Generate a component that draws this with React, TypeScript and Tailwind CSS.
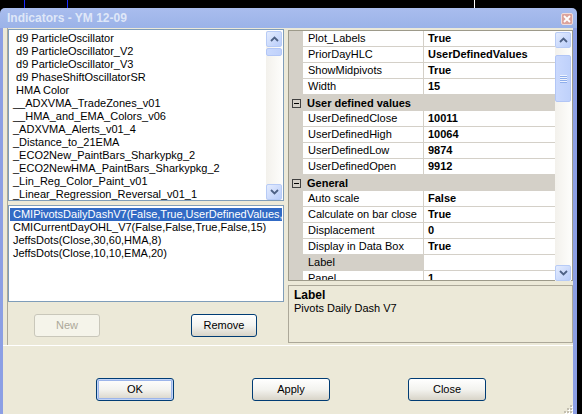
import React from "react";

const available = [
  " d9 ParticleOscillator",
  " d9 ParticleOscillator_V2",
  " d9 ParticleOscillator_V3",
  " d9 PhaseShiftOscillatorSR",
  " HMA Color",
  "__ADXVMA_TradeZones_v01",
  "__HMA_and_EMA_Colors_v06",
  "_ADXVMA_Alerts_v01_4",
  "_Distance_to_21EMA",
  "_ECO2New_PaintBars_Sharkypkg_2",
  "_ECO2NewHMA_PaintBars_Sharkypkg_2",
  "_Lin_Reg_Color_Paint_v01",
  "_Linear_Regression_Reversal_v01_1",
];

const applied = [
  "CMIPivotsDailyDashV7(False,True,UserDefinedValues,True,15)",
  "CMICurrentDayOHL_V7(False,False,True,False,15)",
  "JeffsDots(Close,30,60,HMA,8)",
  "JeffsDots(Close,10,10,EMA,20)",
];

type Prop = { name: string; value?: string; category?: boolean; selected?: boolean };

const props: Prop[] = [
  { name: "Plot_Labels", value: "True" },
  { name: "PriorDayHLC", value: "UserDefinedValues" },
  { name: "ShowMidpivots", value: "True" },
  { name: "Width", value: "15" },
  { name: "User defined values", category: true },
  { name: "UserDefinedClose", value: "10011" },
  { name: "UserDefinedHigh", value: "10064" },
  { name: "UserDefinedLow", value: "9874" },
  { name: "UserDefinedOpen", value: "9912" },
  { name: "General", category: true },
  { name: "Auto scale", value: "False" },
  { name: "Calculate on bar close", value: "True" },
  { name: "Displacement", value: "0" },
  { name: "Display in Data Box", value: "True" },
  { name: "Label", value: "", selected: true },
  { name: "Panel", value: "1" },
];

function Arrow({ up }: { up?: boolean }) {
  return (
    <div className="h-[16px] w-[16px] shrink-0 rounded-[2px] border border-[#b7cbf6] bg-linear-to-br from-[#e4ecfe] to-[#b9cdfa] flex items-center justify-center">
      <svg width="9" height="6" viewBox="0 0 9 6">
        <path
          d={up ? "M1 5 L4.5 1.5 L8 5" : "M1 1 L4.5 4.5 L8 1"}
          stroke="#4d6185"
          strokeWidth="1.8"
          fill="none"
        />
      </svg>
    </div>
  );
}

function Thumb({ h, top }: { h: number; top: number }) {
  return (
    <div
      className="w-[16px] rounded-[2px] border border-[#b2c6f6] bg-linear-to-r from-[#cad9fd] to-[#bfd1fb] flex flex-col items-center justify-center gap-[1px]"
      style={{ height: h, marginTop: top }}
    >
      {h > 20 &&
        [0, 1, 2, 3].map((i) => (
          <div key={i} className="w-[7px] h-[1px] bg-[#eef3fe] shadow-[0_1px_0_#8faeeb]" />
        ))}
    </div>
  );
}

function Scrollbar({ thumbTop, thumbH }: { thumbTop: number; thumbH: number }) {
  return (
    <div className="w-[16px] h-full flex flex-col bg-linear-to-r from-[#f3f1ec] to-[#fdfdfb]">
      <Arrow up />
      <Thumb h={thumbH} top={thumbTop} />
      <div className="flex-1" />
      <Arrow />
    </div>
  );
}

function Button({
  label,
  w,
  disabled,
  def,
}: {
  label: string;
  w: string;
  disabled?: boolean;
  def?: boolean;
}) {
  if (disabled)
    return (
      <div
        className={`${w} h-[23px] rounded-[3px] border border-[#c9c7ba] bg-[#f5f4ea] text-[#aca899] text-[11px] flex items-center justify-center`}
      >
        {label}
      </div>
    );
  return (
    <div
      className={`${w} h-[23px] rounded-[3px] border border-[#003c74] bg-linear-to-b from-[#ffffff] via-[#f3f3ef] to-[#d8d4c8] text-black text-[11px] flex items-center justify-center ${
        def ? "shadow-[inset_0_0_0_1px_#c2d4f7,inset_0_0_0_2px_#9cb5ea]" : ""
      }`}
    >
      {label}
    </div>
  );
}

export default function App() {
  return (
    <div className="w-[582px] h-[414px] bg-black overflow-hidden font-['Liberation_Sans',Arial,sans-serif]">
      {/* chart behind */}
      <div className="h-[8px] flex">
        <div className="w-[24px]" />
        <div className="w-px bg-[#1a2cff]" />
        <div className="w-[42px]" />
        <div className="w-px bg-[#1a2cff]" />
        <div className="w-[406px]" />
        <div className="w-px bg-white" />
      </div>

      <div className="w-[577px] h-[406px] flex flex-col">
        {/* title bar */}
        <div className="h-[20px] shrink-0 rounded-t-[5px] bg-linear-to-b from-[#a9bdee] to-[#9bb3e8] flex items-center justify-between pl-[7px] pr-[4px]">
          <span className="text-[12px] font-bold text-[#dfe7f8] leading-none">Indicators - YM 12-09</span>
          <div className="mt-[2px] w-[12px] h-[12px] rounded-[2px] border border-[#f1dcda] bg-[#dca39c] flex items-center justify-center">
            <svg width="8" height="8" viewBox="0 0 8 8">
              <path d="M1 1 L7 7 M7 1 L1 7" stroke="white" strokeWidth="1.8" />
            </svg>
          </div>
        </div>

        {/* body */}
        <div className="flex-1 flex flex-col bg-[#ece9d8] border-l-[3px] border-r-[4px] border-[#8c9fe4]">
          <div className="h-[317px] flex pl-[4px]">
            {/* left column */}
            <div className="w-[277px] border-l border-[#aca899] pt-[1px] flex flex-col">
              <div className="w-[276px] h-[172px] border border-[#7f9db9] bg-white flex pl-[1px] pt-[1px] pr-[1px]">
                <div className="flex-1 pt-[1px] text-[11px] leading-[13px] text-black overflow-hidden">
                  {available.map((t) => (
                    <div key={t} className="h-[13px] pl-[3px] whitespace-pre">
                      {t}
                    </div>
                  ))}
                </div>
                <div className="h-[169px]">
                  <Scrollbar thumbTop={1} thumbH={8} />
                </div>
              </div>

              <div className="mt-[4px] w-[276px] h-[97px] border border-[#7f9db9] bg-white px-[1px] pt-[2px] text-[11px] leading-[13px]">
                {applied.map((t, i) => (
                  <div
                    key={t}
                    className={`h-[13px] pl-[3px] whitespace-nowrap overflow-hidden ${
                      i === 0 ? "bg-[#316ac5] text-white" : "text-black"
                    }`}
                  >
                    {t}
                  </div>
                ))}
              </div>

              <div className="mt-[12px] flex pl-[26px] gap-[91px]">
                <Button label="New" w="w-[66px]" disabled />
                <Button label="Remove" w="w-[66px]" />
              </div>
            </div>

            {/* right column */}
            <div className="ml-[4px] w-[285px] flex flex-col pt-[2px]">
              <div className="h-[251px] border border-[#9d9a8a] bg-white flex">
                <div className="w-[266px] overflow-hidden text-[11px] leading-[15px]">
                  {props.map((p) =>
                    p.category ? (
                      <div key={p.name} className="h-[16px] bg-[#d4d0c8] flex items-center">
                        <div className="w-[14px] flex justify-center">
                          <div className="w-[9px] h-[9px] border border-[#404040] flex items-center justify-center">
                            <div className="w-[5px] h-px bg-black" />
                          </div>
                        </div>
                        <span className="pl-[4px] font-bold text-black">{p.name}</span>
                      </div>
                    ) : (
                      <div key={p.name} className="h-[16px] flex">
                        <div className="w-[14px] bg-[#d4d0c8]" />
                        <div
                          className={`w-[120px] pl-[5px] border-b border-[#d4d0c8] text-black whitespace-nowrap ${
                            p.selected ? "bg-[#d4d0c8]" : ""
                          }`}
                        >
                          {p.name}
                        </div>
                        <div className="w-px bg-[#d4d0c8]" />
                        <div className="flex-1 pl-[4px] border-b border-[#d4d0c8] font-bold text-black">
                          {p.value}
                        </div>
                      </div>
                    )
                  )}
                </div>
                <div className="pt-[1px]">
                  <div className="h-[249px]">
                    <Scrollbar thumbTop={7} thumbH={47} />
                  </div>
                </div>
              </div>

              <div className="mt-[4px] h-[58px] border border-[#aca899] px-[5px] pt-[3px] text-[11px] leading-[13px] text-black">
                <div className="font-bold text-[12px]">Label</div>
                <div>Pivots Daily Dash V7</div>
              </div>
            </div>
          </div>

          {/* bottom buttons */}
          <div className="relative flex-1 border-t border-white pt-[32px] pl-[93px] flex gap-[78px]">
            <Button label="OK" w="w-[78px]" def />
            <Button label="Apply" w="w-[78px]" />
            <Button label="Close" w="w-[78px]" />
            <svg className="absolute right-0 bottom-0" width="11" height="11" viewBox="0 0 11 11">
              {[
                [8, 2],
                [5, 5],
                [8, 5],
                [2, 8],
                [5, 8],
                [8, 8],
              ].map(([x, y]) => (
                <g key={`${x}-${y}`}>
                  <rect x={x + 1} y={y + 1} width="2" height="2" fill="white" />
                  <rect x={x} y={y} width="2" height="2" fill="#c3bfb1" />
                </g>
              ))}
            </svg>
          </div>
        </div>
      </div>
    </div>
  );
}
